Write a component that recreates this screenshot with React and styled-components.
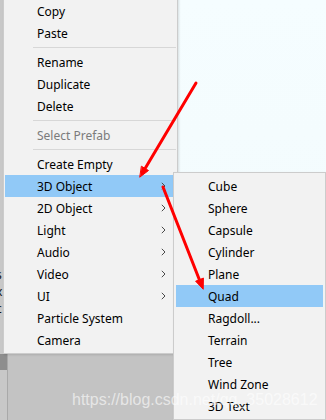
import React from "react"
import styled, { createGlobalStyle } from "styled-components"

const GlobalStyle = createGlobalStyle`
  html, body {
    margin: 0;
    padding: 0;
  }
  body {
    font-family: "Noto Sans", "Liberation Sans", sans-serif;
  }
`

const Screen = styled.div`
  position: relative;
  width: 326px;
  height: 420px;
  overflow: hidden;
  display: flex;
  flex-direction: row;
  background: #c3c3c3;
`

const LeftPanel = styled.div`
  width: 7px;
  flex-shrink: 0;
  background: #c8c8c8;
  border-right: solid 1px #a9a9a9;
  display: flex;
  flex-direction: column;
  overflow: hidden;
  padding-top: 266px;
`

const ClippedLabel = styled.div`
  font-size: 12px;
  line-height: 17px;
  color: #111;
  margin-left: -4px;
`

const TabBlock = styled.div`
  height: 16px;
  margin-top: 37px;
  background: #8e8e8e;
`

const RightArea = styled.div`
  flex-grow: 1;
  display: flex;
  flex-direction: column;
`

const ScenePanel = styled.div`
  height: 260px;
  background: linear-gradient(180deg, #f5fdff 0%, #f3fbfd 100%);
`

const LowerPanel = styled.div`
  flex-grow: 1;
  background: #c3c3c3;
`

const Menu = styled.div`
  position: absolute;
  left: ${props => props.left}px;
  top: ${props => props.top}px;
  width: ${props => props.width}px;
  box-sizing: border-box;
  background: #f2f2f2;
  border: solid 1px #cccccc;
  padding: 2px ${props => props.padRight}px 2px ${props => props.padLeft}px;
  display: flex;
  flex-direction: column;
  box-shadow: 1px 1px 2px rgba(0, 0, 0, 0.12);
`

const Item = styled.div`
  height: 22px;
  display: flex;
  align-items: center;
  justify-content: space-between;
  padding: 0 10px 0 32px;
  font-size: 12px;
  color: ${props => (props.disabled ? "#7b7b7b" : "#000")};
  background: ${props => (props.active ? "#91c9f7" : "transparent")};
  white-space: nowrap;
`

const Separator = styled.div`
  height: 1px;
  margin: 3px 0 3px 28px;
  background: #d7d7d7;
`

const Chevron = () => (
  <svg width="5" height="8" viewBox="0 0 5 8">
    <polyline points="0.8,0.8 4,4 0.8,7.2" fill="none" stroke="#4a4a4a" strokeWidth="1" />
  </svg>
)

const Overlay = styled.svg`
  position: absolute;
  left: 0;
  top: 0;
  pointer-events: none;
`

const Watermark = styled.div`
  position: absolute;
  left: 72px;
  top: 390px;
  font-family: "Liberation Sans", Arial, sans-serif;
  font-size: 16px;
  line-height: 20px;
  color: rgba(255, 255, 255, 0.6);
  white-space: nowrap;
  pointer-events: none;
`

const mainItems = [
  { label: "Copy" },
  { label: "Paste" },
  { sep: true },
  { label: "Rename" },
  { label: "Duplicate" },
  { label: "Delete" },
  { sep: true },
  { label: "Select Prefab", disabled: true },
  { sep: true },
  { label: "Create Empty" },
  { label: "3D Object", sub: true, active: true },
  { label: "2D Object", sub: true },
  { label: "Light", sub: true },
  { label: "Audio", sub: true },
  { label: "Video", sub: true },
  { label: "UI", sub: true },
  { label: "Particle System" },
  { label: "Camera" },
]

const subItems = [
  "Cube", "Sphere", "Capsule", "Cylinder", "Plane", "Quad",
  "Ragdoll...", "Terrain", "Tree", "Wind Zone", "3D Text",
]

const App = () => (
  <>
    <GlobalStyle />
    <Screen>
      <LeftPanel>
        <ClippedLabel>s</ClippedLabel>
        <ClippedLabel>x</ClippedLabel>
        <ClippedLabel>c</ClippedLabel>
        <TabBlock />
      </LeftPanel>
      <RightArea>
        <ScenePanel />
        <LowerPanel />
      </RightArea>

      <Menu left={3} top={-3} width={175} padLeft={1} padRight={1}>
        {mainItems.map((it, i) =>
          it.sep ? (
            <Separator key={i} />
          ) : (
            <Item key={i} active={it.active} disabled={it.disabled}>
              <span>{it.label}</span>
              {it.sub && <Chevron />}
            </Item>
          )
        )}
      </Menu>

      <Menu left={173} top={172} width={153} padLeft={2} padRight={2}>
        {subItems.map(label => (
          <Item key={label} active={label === "Quad"}>
            <span>{label}</span>
          </Item>
        ))}
      </Menu>

      <Overlay width="326" height="420" viewBox="0 0 326 420">
        <g fill="#f00" stroke="#f00" strokeLinecap="round">
          <line x1="196" y1="83" x2="145.1" y2="168.4" strokeWidth="3" />
          <polygon points="140,177 148.5,170.5 141.7,166.4" strokeWidth="1" />
          <line x1="163" y1="187" x2="199.4" y2="279.7" strokeWidth="3" />
          <polygon points="203,289 195.6,281.2 203.1,278.2" strokeWidth="1" />
        </g>
      </Overlay>

      <Watermark>https://blog.csdn.net/qq_35028612</Watermark>
    </Screen>
  </>
)

export default App
